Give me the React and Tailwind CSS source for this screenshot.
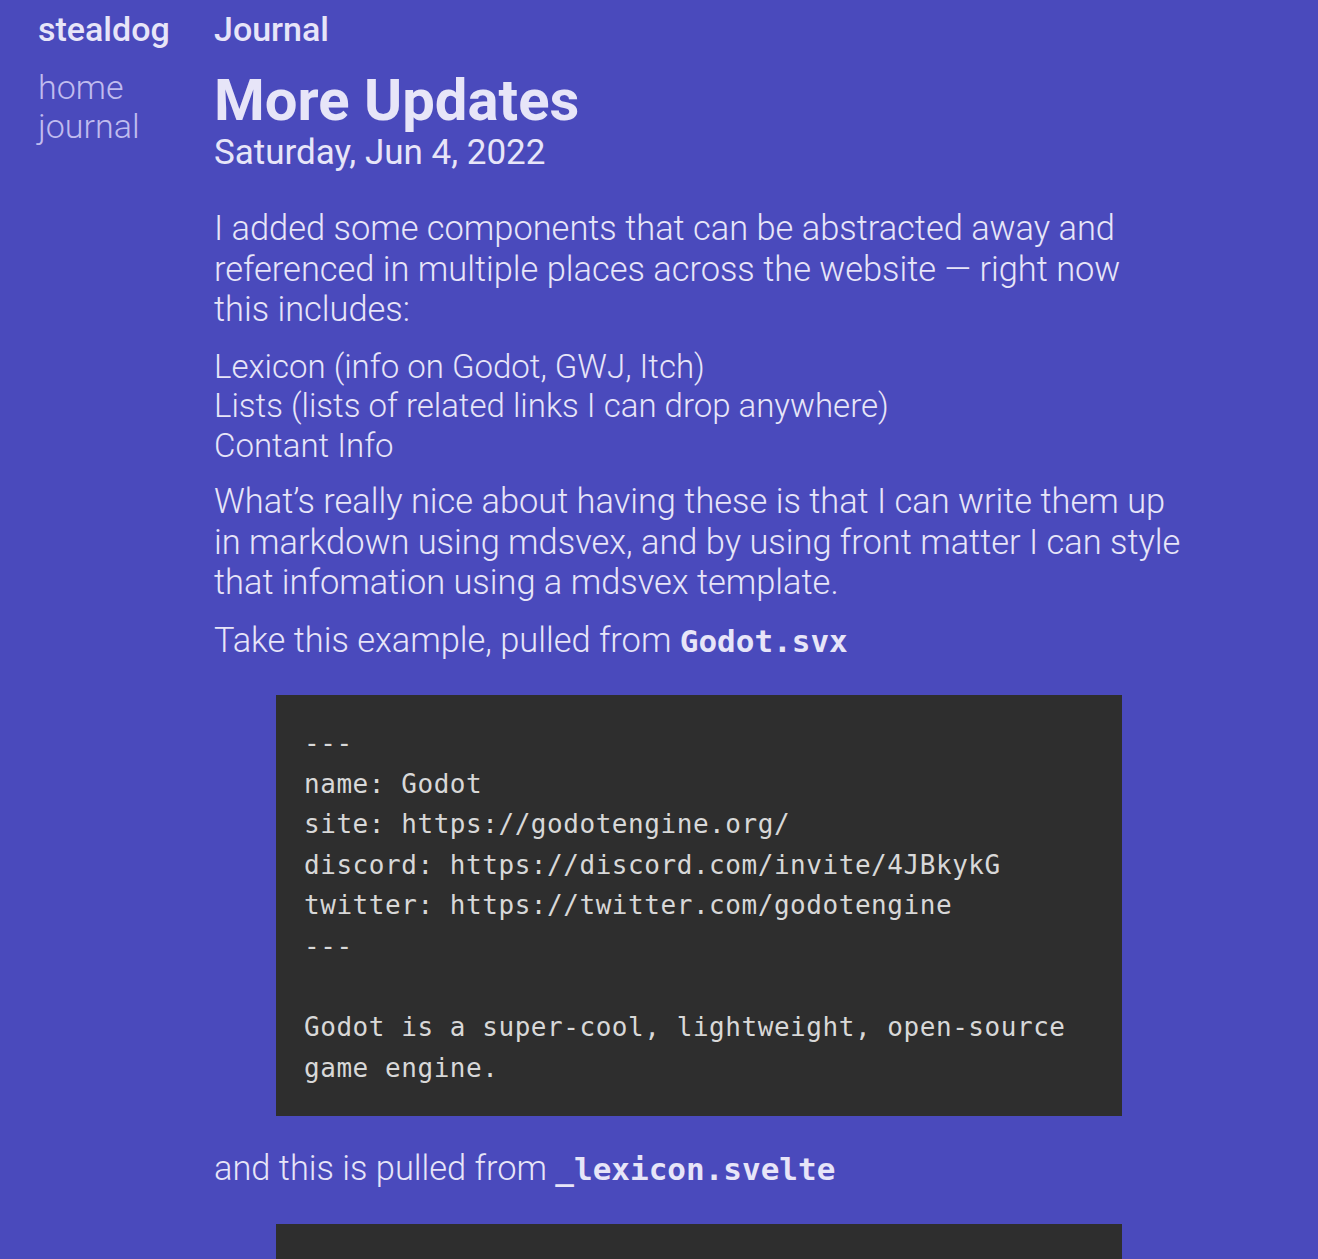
const godotSvx = `---
name: Godot
site: https://godotengine.org/
discord: https://discord.com/invite/4JBkykG
twitter: https://twitter.com/godotengine
---

Godot is a super-cool, lightweight, open-source
game engine.`;

const lexiconSvelte = `<script>
  export let name;
  export let site;
  export let discord;
  export let twitter;
</script>

<h2>{name}</h2>
<slot />`;

const CodeBlock = ({ children }) => (
  <pre className="ml-[62px] mr-[60px] mt-[34px] mb-[32px] bg-[#2e2e2e] p-[28px] text-[26px] leading-[40.6px] tracking-[0.55px] text-[#d8d8d8] font-['DejaVu_Sans_Mono',monospace] whitespace-pre">
    {children}
  </pre>
);

const Inline = ({ children }) => (
  <code className="font-['DejaVu_Sans_Mono',monospace] font-bold text-[31px]">{children}</code>
);

export default function App() {
  return (
    <div className="min-h-screen bg-[#4a4abc] font-['Roboto',sans-serif] text-[#e7e5f8]">
      <div className="grid grid-cols-[176px_968px] pl-[38px]">
        <div className="pt-[9px] text-[34px] leading-[40px] font-medium">stealdog</div>
        <div className="pt-[9px] text-[34px] leading-[40px] font-medium">Journal</div>

        <nav className="flex flex-col pt-[19px] text-[34px] leading-[39px] font-light text-[#c0bcef]">
          <a href="#">home</a>
          <a href="#">journal</a>
        </nav>

        <main>
          <h1 className="mt-[21px] text-[58px] leading-[60px] font-bold">More Updates</h1>
          <div className="mt-[3px] text-[35px] leading-[40px]">Saturday, Jun 4, 2022</div>

          <div className="mt-[35px] text-[34.4px] leading-[40.5px] font-light">
            <p>
              I added some components that can be abstracted away and referenced in multiple places
              across the website — right now this includes:
            </p>
            <ul className="mt-[17px] text-[33px] leading-[39.5px] font-light">
              <li>Lexicon (info on Godot, GWJ, Itch)</li>
              <li>Lists (lists of related links I can drop anywhere)</li>
              <li>Contant Info</li>
            </ul>
            <p className="mt-[16px]">
              What’s really nice about having these is that I can write them up in markdown using
              mdsvex, and by using front matter I can style that infomation using a mdsvex template.
            </p>
            <p className="mt-[17px]">
              Take this example, pulled from <Inline>Godot.svx</Inline>
            </p>

            <CodeBlock>{godotSvx}</CodeBlock>

            <p>
              and this is pulled from <Inline>_lexicon.svelte</Inline>
            </p>

            <CodeBlock>{lexiconSvelte}</CodeBlock>
          </div>
        </main>
      </div>
    </div>
  );
}
